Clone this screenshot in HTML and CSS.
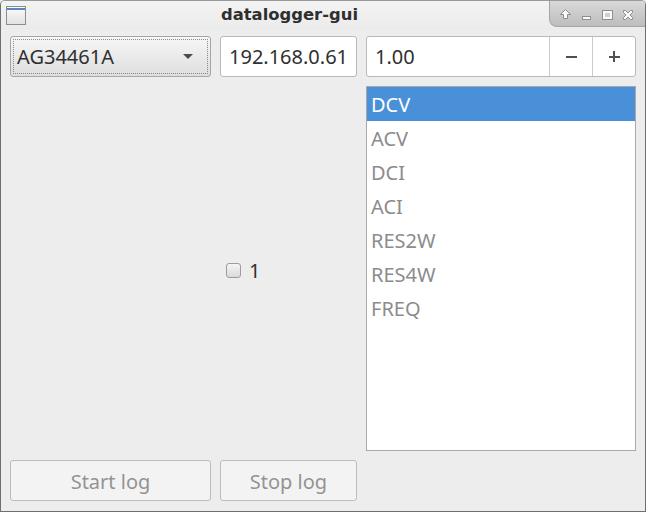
FILE: index.html
```html
<!DOCTYPE html>
<html>
<head>
<meta charset="utf-8">
<link rel="stylesheet" href="styles.css">
</head>
<body>
<div class="window">
  <div class="titlebar">
    <div class="appicon"><div class="appicon-top"></div></div>
    <div class="title">datalogger-gui</div>
    <div class="controls">
      <svg width="96" height="27" viewBox="0 0 96 27">
        <g fill="#fafafa" stroke="#8e8e8e" stroke-width="1">
          <path d="M16.5 9.5 L21.5 14.5 L18.5 14.5 L18.5 18.5 L14.5 18.5 L14.5 14.5 L11.5 14.5 Z"/>
          <rect x="33.5" y="16.5" width="8" height="3"/>
          <rect x="53.5" y="10.5" width="10" height="9"/>
          <rect x="56" y="13" width="5" height="4" fill="#cfcfcf" stroke="none"/>
          <path d="M74.5 10.5 L76.5 10.5 L79 13 L81.5 10.5 L83.5 10.5 L83.5 12.5 L81 15 L83.5 17.5 L83.5 19.5 L81.5 19.5 L79 17 L76.5 19.5 L74.5 19.5 L74.5 17.5 L77 15 L74.5 12.5 Z"/>
        </g>
      </svg>
    </div>
  </div>
  <div class="content">
    <div class="combo">
      <div class="focus">
        <span class="combo-text">AG34461A</span>
        <span class="arrow"></span>
      </div>
    </div>
    <div class="field">192.168.0.61</div>
    <div class="spin">
      <div class="spin-text">1.00</div>
      <div class="spin-btn"><span class="minus"></span></div>
      <div class="spin-btn"><span class="plus"></span></div>
    </div>
    <div class="checkarea">
      <span class="checkbox"></span>
      <span class="checklabel">1</span>
    </div>
    <div class="list">
      <div class="item selected">DCV</div>
      <div class="item">ACV</div>
      <div class="item">DCI</div>
      <div class="item">ACI</div>
      <div class="item">RES2W</div>
      <div class="item">RES4W</div>
      <div class="item">FREQ</div>
    </div>
    <div class="btn">Start log</div>
    <div class="btn">Stop log</div>
  </div>
</div>
</body>
</html>
```
FILE: styles.css
```css
* { box-sizing: border-box; }
html, body { margin: 0; padding: 0; }
body {
  width: 646px;
  height: 512px;
  background: #ededed;
  font-family: "Noto Sans", sans-serif;
  font-size: 20px;
  overflow: hidden;
}
.window {
  width: 646px;
  height: 512px;
  border: 1px solid #6f6f6f;
  border-top-color: #9a9a9a;
  border-radius: 5px 5px 0 0;
  background: #ededed;
  display: flex;
  flex-direction: column;
  overflow: hidden;
}
.titlebar {
  height: 29px;
  flex: none;
  display: flex;
  align-items: flex-start;
  background: linear-gradient(#f3f3f3, #ebebeb);
  position: relative;
}
.appicon {
  margin: 5px 0 0 5px;
  width: 20px;
  height: 19px;
  border: 1px solid #8d8d8d;
  background: linear-gradient(#fbfbfb, #e2e2e2);
}
.appicon-top {
  height: 2px;
  background: #5b86c4;
  margin-top: 1px;
}
.title {
  flex: 1;
  text-align: center;
  font-family: "DejaVu Sans", sans-serif;
  font-weight: bold;
  font-size: 16.4px;
  color: #2f2f2f;
  line-height: 28px;
  padding-left: 4px;
}
.controls {
  width: 96px;
  height: 27px;
  margin-top: -1px;
  background: linear-gradient(#dadada, #bdbdbd);
  border-left: 1px solid #a5a5a5;
  border-bottom: 1px solid #a5a5a5;
  border-bottom-left-radius: 8px;
  display: flex;
}
.controls svg { display: block; margin-left: -1px; }
.content {
  flex: 1;
  display: grid;
  grid-template-columns: 201px 137px 270px;
  grid-template-rows: 41px 365px 41px;
  column-gap: 9px;
  row-gap: 9px;
  padding: 6px 9px 10px 9px;
}
.combo {
  border: 1px solid #a6a6a6;
  border-radius: 3px;
  background: linear-gradient(#f7f7f7, #dedede);
  padding: 2px;
}
.focus {
  height: 100%;
  border: 1px dotted #8a8a8a;
  display: flex;
  align-items: center;
  justify-content: space-between;
  padding: 0 14px 0 3px;
  color: #303030;
}
.arrow {
  width: 0;
  height: 0;
  border-left: 5px solid transparent;
  border-right: 5px solid transparent;
  border-top: 5px solid #4a4a4a;
}
.field {
  background: #fff;
  border: 1px solid #b9b9b9;
  border-radius: 3px;
  display: flex;
  align-items: center;
  padding-left: 8px;
  color: #303030;
}
.spin {
  background: #fff;
  border: 1px solid #b9b9b9;
  border-radius: 3px;
  display: flex;
  color: #303030;
}
.spin-text {
  flex: 1;
  display: flex;
  align-items: center;
  padding-left: 8px;
}
.spin-btn {
  width: 43px;
  border-left: 1px solid #cbcbcb;
  display: flex;
  align-items: center;
  justify-content: center;
  position: relative;
}
.minus {
  width: 11px;
  height: 2px;
  background: #505050;
}
.plus {
  width: 11px;
  height: 2px;
  background: #505050;
  position: relative;
}
.plus::after {
  content: "";
  position: absolute;
  left: 4.5px;
  top: -4.5px;
  width: 2px;
  height: 11px;
  background: #505050;
}
.checkarea {
  grid-column: 1 / 3;
  display: flex;
  align-items: center;
  padding-left: 216px;
  padding-top: 3px;
  color: #303030;
}
.checkbox {
  width: 15px;
  height: 15px;
  border: 1px solid #9c9c9c;
  border-radius: 3px;
  background: linear-gradient(#f5f5f5, #dadada);
  margin-right: 8px;
}
.list {
  background: #fff;
  border: 1px solid #a9a9a9;
  display: flex;
  flex-direction: column;
}
.item {
  height: 34px;
  line-height: 34px;
  padding-left: 4px;
  padding-top: 1px;
  color: #8c8c8c;
}
.item.selected {
  background: #4a90d9;
  color: #fff;
}
.btn {
  border: 1px solid #bcbcbc;
  border-radius: 3px;
  background: #f3f3f3;
  color: #939393;
  display: flex;
  align-items: center;
  justify-content: center;
  padding-top: 2px;
}
```
